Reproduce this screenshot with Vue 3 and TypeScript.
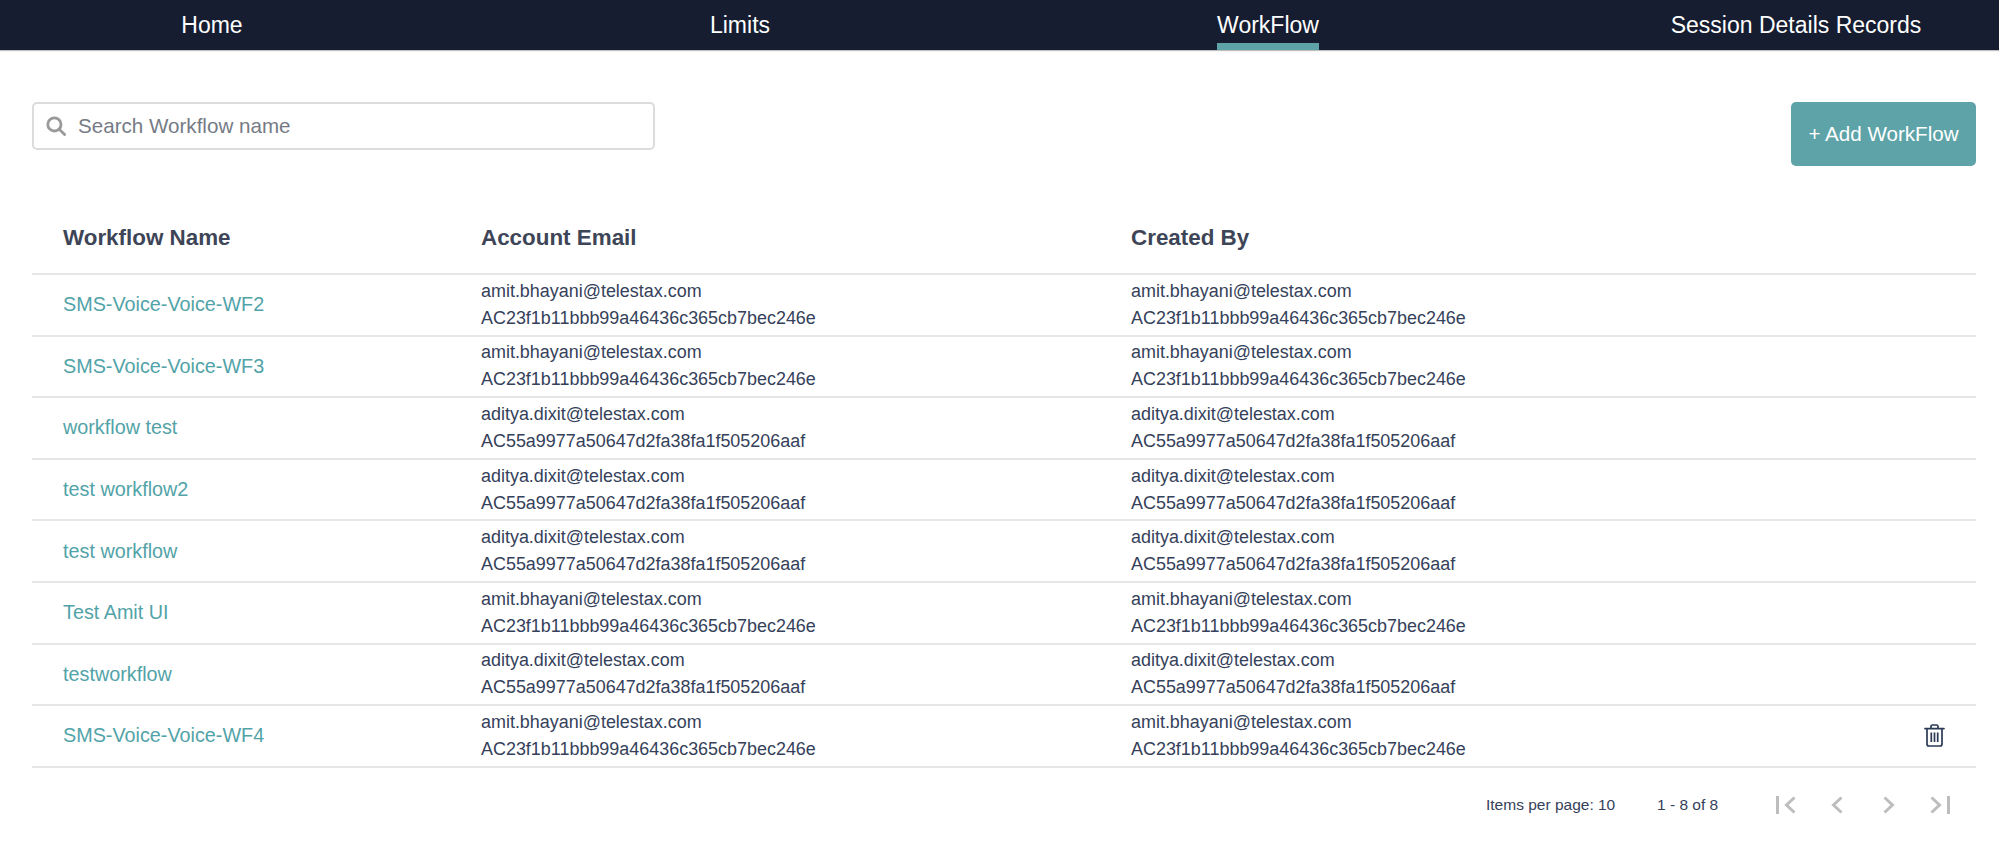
<template>
  <div class="page">
    <nav class="topbar">
      <div class="tabs">
        <div v-for="tab in tabs" :key="tab" class="tab">
          <span class="tab-label" :class="{ active: tab === 'WorkFlow' }">{{ tab }}</span>
        </div>
      </div>
    </nav>

    <main class="content">
      <div class="toolbar">
        <label class="search">
          <svg class="search-icon" viewBox="0 0 20 20" width="20" height="20" fill="none" stroke="#9a9a9a" stroke-width="2.8">
            <circle cx="8.4" cy="8.4" r="6.600" />
            <path d="M13.200 13.200 18.600 18.600" stroke-linecap="round" />
          </svg>
          <input type="text" placeholder="Search Workflow name" />
        </label>
        <button class="add-btn">+ Add WorkFlow</button>
      </div>

      <div class="table">
        <div class="row head">
          <div class="name-cell">Workflow Name</div>
          <div>Account Email</div>
          <div>Created By</div>
          <div></div>
        </div>
        <div v-for="(item, i) in rows" :key="i" class="row">
          <div class="name-cell"><a class="wf-link">{{ item.name }}</a></div>
          <div class="info">
            <div>{{ item.email }}</div>
            <div>{{ item.sid }}</div>
          </div>
          <div class="info">
            <div>{{ item.email }}</div>
            <div>{{ item.sid }}</div>
          </div>
          <div class="actions">
            <svg v-if="i === rows.length - 1" viewBox="0 0 21 23" width="21" height="23" fill="none" stroke="#2c3a54" stroke-width="1.7">
              <path d="M1 4.600H20" stroke-linecap="round" />
              <path d="M7 4.400V2.600C7 1.600 7.700 1 8.600 1h3.800c.9 0 1.600.6 1.600 1.600v1.800" />
              <path d="M3 4.600V20c0 1.200.8 2 2 2h11c1.200 0 2-.8 2-2V4.600" />
              <path d="M7.300 8.500V18M10.500 8.500V18M13.700 8.500V18" />
            </svg>
          </div>
        </div>
      </div>

      <div class="pager">
        <span class="per-page">Items per page: 10</span>
        <span class="range">1 - 8 of 8</span>
        <div class="pager-icons">
          <svg viewBox="0 0 20 18" width="20" height="18" fill="none" stroke="#bdbdbd" stroke-width="3">
            <path d="M1.500 0V18M18.500 1.500 10.500 9l8 7.500" />
          </svg>
          <svg viewBox="0 0 12 18" width="12" height="18" fill="none" stroke="#bdbdbd" stroke-width="3">
            <path d="M10.500 1.500 2.500 9l8 7.500" />
          </svg>
          <svg viewBox="0 0 12 18" width="12" height="18" fill="none" stroke="#bdbdbd" stroke-width="3">
            <path d="M1.500 1.500 9.500 9l-8 7.500" />
          </svg>
          <svg viewBox="0 0 20 18" width="20" height="18" fill="none" stroke="#bdbdbd" stroke-width="3">
            <path d="M18.500 0V18M1.500 1.500 9.500 9l-8 7.500" />
          </svg>
        </div>
      </div>
    </main>
  </div>
</template>

<script setup lang="ts">
const tabs = ['Home', 'Limits', 'WorkFlow', 'Session Details Records'];

const amit = { email: 'amit.bhayani@telestax.com', sid: 'AC23f1b11bbb99a46436c365cb7bec246e' };
const aditya = { email: 'aditya.dixit@telestax.com', sid: 'AC55a9977a50647d2fa38fa1f505206aaf' };

const rows = [
  { name: 'SMS-Voice-Voice-WF2', ...amit },
  { name: 'SMS-Voice-Voice-WF3', ...amit },
  { name: 'workflow test', ...aditya },
  { name: 'test workflow2', ...aditya },
  { name: 'test workflow', ...aditya },
  { name: 'Test Amit UI', ...amit },
  { name: 'testworkflow', ...aditya },
  { name: 'SMS-Voice-Voice-WF4', ...amit }
];
</script>

<style>
html,
body {
  margin: 0;
  background: #fff;
  overflow: hidden;
}
</style>

<style scoped>
.page {
  font-family: "Liberation Sans", Arial, sans-serif;
  color: #35415a;
  height: 861px;
  overflow: hidden;
}

.topbar {
  height: 50px;
  background: #161d31;
  box-shadow: 0 1px 1px rgba(0, 0, 0, 0.25);
  overflow: hidden;
}

.tabs {
  display: grid;
  grid-template-columns: repeat(4, 528px);
  margin-left: -52px;
}

.tab {
  display: flex;
  justify-content: center;
}

.tab-label {
  display: block;
  height: 51px;
  box-sizing: border-box;
  padding-top: 11px;
  font-size: 23px;
  line-height: 28px;
  color: #fff;
  white-space: nowrap;
}

.tab-label.active {
  border-bottom: 8px solid #5da3a8;
}

.content {
  padding: 52px 23px 0 32px;
}

.toolbar {
  display: flex;
  justify-content: space-between;
  align-items: flex-start;
  height: 64px;
}

.search {
  display: flex;
  align-items: center;
  gap: 12px;
  box-sizing: border-box;
  width: 623px;
  height: 48px;
  padding: 0 12px;
  border: 2px solid #dcdcdc;
  border-radius: 5px;
}

.search-icon {
  flex: none;
}

.search input {
  flex: 1;
  min-width: 0;
  border: 0;
  outline: 0;
  padding: 0;
  font: 20.6px "Liberation Sans", Arial, sans-serif;
  color: #35415a;
}

.search input::placeholder {
  color: #757b85;
  opacity: 1;
}

.add-btn {
  width: 185px;
  height: 64px;
  border: 0;
  border-radius: 5px;
  background: #5da3a8;
  color: #fff;
  font: 20.6px "Liberation Sans", Arial, sans-serif;
  white-space: nowrap;
  padding: 0 0 1px;
}

.table {
  margin-top: 42px;
}

.row {
  display: grid;
  grid-template-columns: 449px 650px 1fr 100px;
  box-sizing: border-box;
  height: 61.6px;
  align-items: center;
  border-bottom: 2px solid #e6e6e6;
}

.row.head {
  height: 67px;
  padding-bottom: 5px;
  font-size: 22.4px;
  font-weight: 700;
  color: #3d4557;
}

.name-cell {
  padding-left: 31px;
}

.wf-link {
  font-size: 19.8px;
  color: #52a3a8;
}

.info {
  font-size: 17.95px;
  line-height: 27px;
  color: #35415a;
}

.actions {
  display: flex;
  justify-content: flex-end;
  padding-right: 31px;
}

.pager {
  display: flex;
  align-items: center;
  margin-top: 28px;
  padding-left: 1454px;
  font-size: 15.5px;
  color: #35415a;
}

.per-page {
  width: 171px;
}

.range {
  width: 119px;
}

.pager-icons {
  display: flex;
  align-items: center;
  gap: 35px;
}

.pager-icons svg:nth-child(2) {
  margin-right: 5px;
}
</style>
